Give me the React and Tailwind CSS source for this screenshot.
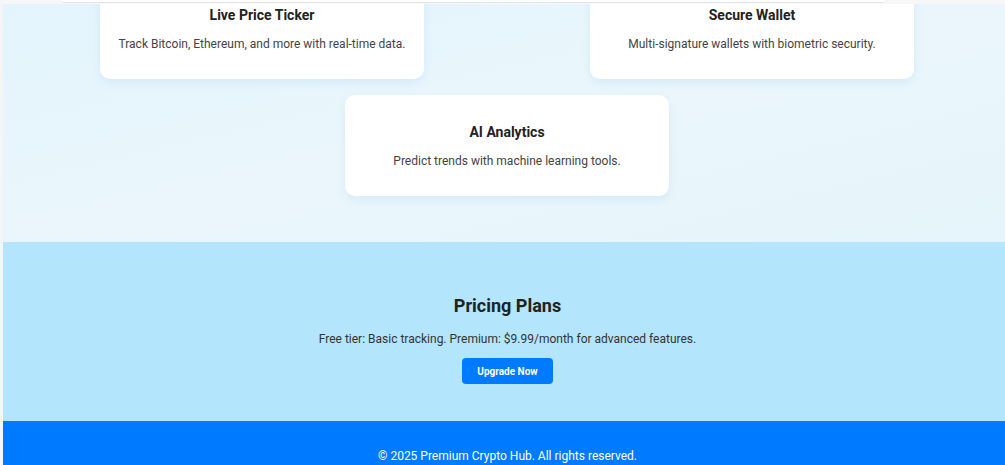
import React from "react";

const features = [
  { title: "Live Price Ticker", desc: "Track Bitcoin, Ethereum, and more with real-time data." },
  { title: "Secure Wallet", desc: "Multi-signature wallets with biometric security." },
  { title: "AI Analytics", desc: "Predict trends with machine learning tools." },
];

export default function App() {
  return (
    <div className="w-[1005px] h-[465px] overflow-hidden flex bg-[#f3f4f5] text-[#333]" style={{ fontFamily: "Roboto, 'Liberation Sans', sans-serif" }}>
      <div className="w-[3px] shrink-0 bg-[#f4f5f6]" />
      <div className="flex-1 flex flex-col min-w-0">
        <div className="h-[4px] shrink-0 bg-[#f7f7f7] relative">
          <div className="absolute left-[58px] right-[120px] top-0 h-[3px] bg-white border-b border-[#e4e4e4] rounded-b" />
        </div>
        <section className="h-[238px] shrink-0 overflow-hidden bg-gradient-to-br from-[#e3f4fc] via-[#eaf6fc] to-[#e6f5fb] pl-[20px] pr-[14px]">
          <div className="flex flex-wrap justify-center gap-x-[166px] gap-y-4 -mt-[26px]">
            {features.map((f) => (
              <div key={f.title} className="w-[324px] shrink-0 h-[101px] bg-white rounded-[10px] shadow-[0_4px_10px_rgba(0,120,200,0.08)] flex flex-col items-center pt-[29px]">
                <h3 className="text-[14px] font-bold leading-[17px] text-[#222]">{f.title}</h3>
                <p className="mt-[13px] text-[12px] leading-[15px] text-[#444]">{f.desc}</p>
              </div>
            ))}
          </div>
        </section>
        <section className="h-[179px] shrink-0 bg-[#b3e5fc] flex flex-col items-center pt-[53px] pl-[7px]">
          <h2 className="text-[18px] font-bold leading-[22px] text-[#222]">Pricing Plans</h2>
          <p className="mt-[15px] text-[12px] leading-[15px] text-[#333]">Free tier: Basic tracking. Premium: $9.99/month for advanced features.</p>
          <button className="mt-[11px] w-[91px] h-[26px] rounded-[4px] bg-[#007bff] text-white text-[10px] font-bold">Upgrade Now</button>
        </section>
        <footer className="flex-1 bg-[#007bff] flex justify-center pt-[28px] pl-[7px]">
          <p className="text-[12px] leading-[15px] text-white">© 2025 Premium Crypto Hub. All rights reserved.</p>
        </footer>
      </div>
    </div>
  );
}
